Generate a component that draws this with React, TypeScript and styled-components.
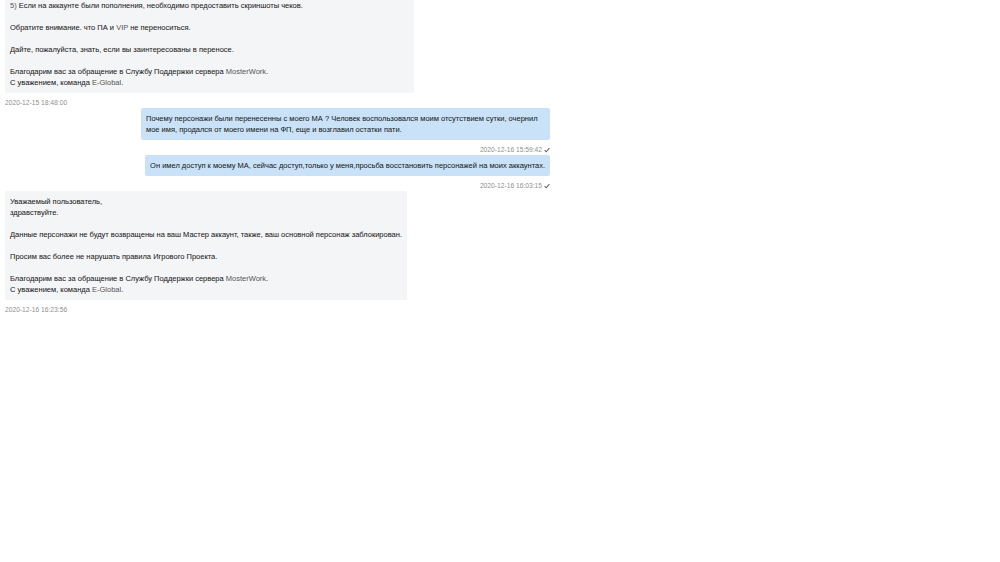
import React from "react";
import styled, { createGlobalStyle } from "styled-components";

const Global = createGlobalStyle`
  html, body { margin: 0; padding: 0; background: #ffffff; }
  body { font-family: "Liberation Sans", Arial, sans-serif; }
`;

const Chat = styled.div`
  width: 545px;
  margin-left: 5px;
  display: flex;
  flex-direction: column;
`;

const Message = styled.div<{ $mine?: boolean }>`
  display: flex;
  flex-direction: column;
  align-items: ${(p) => (p.$mine ? "flex-end" : "flex-start")};
`;

const Bubble = styled.div<{ $mine?: boolean; $cut?: boolean }>`
  box-sizing: border-box;
  max-width: 409px;
  width: ${(p) => (p.$cut ? "409px" : "auto")};
  padding: ${(p) => (p.$cut ? "0 5px 5px" : "5px")};
  background: ${(p) => (p.$mine ? "#c9e2f8" : "#f4f5f7")};
  border-radius: ${(p) => (p.$cut ? "0 0 2px 2px" : "2px")};
  color: #222222;
  font-size: 7.5px;
  line-height: 11px;
  -webkit-text-stroke: 0.05px #222222;
`;

const Latin = styled.span`
  color: #555555;
  -webkit-text-stroke: 0;
`;

const Stamp = styled.div`
  display: flex;
  align-items: center;
  gap: 2px;
  margin-top: 4px;
  height: 11px;
  font-size: 6.7px;
  line-height: 11px;
  color: #8f8f8f;
`;

const Tick = () => (
  <svg width="6" height="6" viewBox="0 0 6 6">
    <polyline points="0.6,3.2 2.2,4.8 5.4,1.2" fill="none" stroke="#666" strokeWidth="1.1" />
  </svg>
);

export default function App() {
  return (
    <>
      <Global />
      <Chat>
        <Message>
          <Bubble $cut>
            <Latin>5)</Latin> Если на аккаунте были пополнения, необходимо предоставить скриншоты чеков.
            <br />
            <br />
            Обратите внимание. что ПА и <Latin>VIP</Latin> не переноситься.
            <br />
            <br />
            Дайте, пожалуйста, знать, если вы заинтересованы в переносе.
            <br />
            <br />
            Благодарим вас за обращение в Службу Поддержки сервера <Latin>MosterWork</Latin>.
            <br />
            С уважением, команда <Latin>E-Global</Latin>.
          </Bubble>
          <Stamp>2020-12-15 18:48:00</Stamp>
        </Message>
        <Message $mine>
          <Bubble $mine>
            Почему персонажи были перенесенны с моего МА ? Человек воспользовался моим отсутствием сутки, очернил мое имя, продался от моего имени на ФП, еще и возглавил остатки пати.
          </Bubble>
          <Stamp>
            2020-12-16 15:59:42 <Tick />
          </Stamp>
        </Message>
        <Message $mine>
          <Bubble $mine>
            Он имел доступ к моему МА, сейчас доступ,только у меня,просьба восстановить персонажей на моих аккаунтах.
          </Bubble>
          <Stamp>
            2020-12-16 16:03:15 <Tick />
          </Stamp>
        </Message>
        <Message>
          <Bubble>
            Уважаемый пользователь,
            <br />
            здравствуйте.
            <br />
            <br />
            Данные персонажи не будут возвращены на ваш Мастер аккаунт, также, ваш основной персонаж заблокирован.
            <br />
            <br />
            Просим вас более не нарушать правила Игрового Проекта.
            <br />
            <br />
            Благодарим вас за обращение в Службу Поддержки сервера <Latin>MosterWork</Latin>.
            <br />
            С уважением, команда <Latin>E-Global</Latin>.
          </Bubble>
          <Stamp>2020-12-16 16:23:56</Stamp>
        </Message>
      </Chat>
    </>
  );
}
